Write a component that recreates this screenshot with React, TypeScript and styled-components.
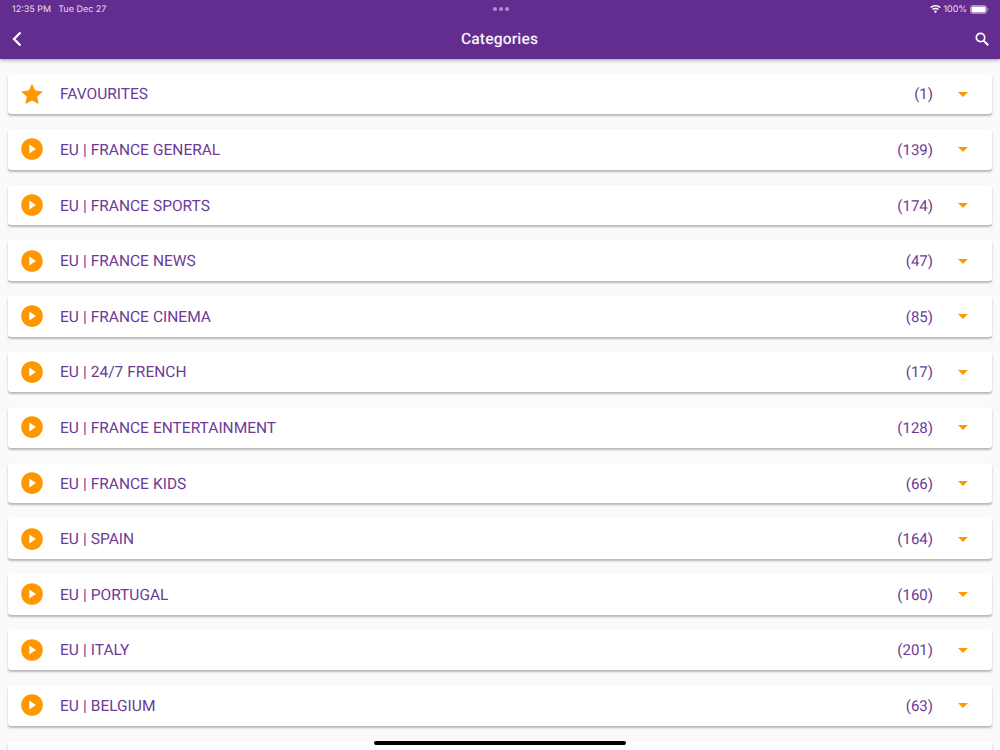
import React from "react";
import styled, { createGlobalStyle } from "styled-components";

const Global = createGlobalStyle`
  html, body { margin: 0; padding: 0; background: #fafafa; }
  body { font-family: Roboto, "Liberation Sans", sans-serif; text-rendering: geometricPrecision; }
`;

const Page = styled.div`
  position: relative;
  width: 1000px;
  height: 750px;
  overflow: hidden;
  background: #fafafa;
  display: flex;
  flex-direction: column;
`;

const Header = styled.header`
  flex: none;
  height: 59px;
  background: #632c8f;
  color: #fff;
  display: flex;
  flex-direction: column;
  box-shadow: 0 1px 4px rgba(0, 0, 0, 0.4);
  z-index: 2;
`;

const StatusBar = styled.div`
  height: 18px;
  display: grid;
  grid-template-columns: 1fr auto 1fr;
  align-items: center;
  padding: 0 11px 0 12px;
  font-family: Inter, Roboto, sans-serif;
  font-size: 9px;
  color: #eadff1;
`;

const StatusLeft = styled.div`
  display: flex;
  gap: 7px;
`;

const Dots = styled.div`
  display: flex;
  gap: 2px;
`;

const Dot = styled.span`
  width: 4px;
  height: 4px;
  border-radius: 50%;
  background: #b88ad8;
`;

const StatusRight = styled.div`
  display: flex;
  justify-content: flex-end;
  align-items: center;
  gap: 3px;
  letter-spacing: -0.1px;
`;

const NavBar = styled.div`
  flex: 1;
  display: flex;
  align-items: center;
  justify-content: space-between;
  padding: 0 11px 0 10px;
`;

const Title = styled.h1`
  margin: 0;
  font-size: 15.6px;
  font-weight: 500;
  letter-spacing: 0.15px;
  color: #f6f1fa;
`;

const IconSlot = styled.div`
  display: flex;
`;

const List = styled.main`
  flex: 1;
  display: flex;
  flex-direction: column;
  gap: 15px;
  padding: 14.6px 8px 0;
`;

const Card = styled.div`
  flex: none;
  height: 40.6px;
  display: flex;
  align-items: center;
  background: #fff;
  border-radius: 3px;
  box-shadow: 0 2px 2px rgba(0, 0, 0, 0.26), 0 0 1px rgba(0, 0, 0, 0.1);
  padding: 0 24.5px 0 13px;
`;

const Label = styled.span`
  flex: 1;
  margin-left: 17px;
  color: #6d3a97;
  font-size: 15.5px;
  word-spacing: 0.2px;
  padding-top: 1px;
`;

const Count = styled.span`
  color: #6d3a97;
  font-size: 15px;
  margin-right: 24.5px;
  padding-top: 1px;
`;

const Caret = styled.span`
  width: 0;
  height: 0;
  margin-top: 1px;
  border-left: 5px solid transparent;
  border-right: 5px solid transparent;
  border-top: 5px solid #ff9800;
`;

const HomeBar = styled.div`
  position: absolute;
  left: 374px;
  bottom: 5px;
  width: 252px;
  height: 4px;
  border-radius: 2px;
  background: #000;
  z-index: 3;
`;

const Star = () => (
  <svg width="22" height="22" viewBox="0 0 24 24" fill="#ff9800" style={{ flex: "none" }}>
    <path d="M12 .8l3.500 7.500 8.200 1-6 5.600 1.600 8.100L12 19l-7.300 4 1.600-8.100-6-5.600 8.200-1z" />
  </svg>
);

const Play = () => (
  <svg width="22" height="22" viewBox="0 0 22 22" style={{ flex: "none" }}>
    <circle cx="11" cy="11" r="10.8" fill="#ff9800" />
    <path d="M8.300 6.600v8.800l6.600-4.400z" fill="#fff" />
  </svg>
);

const Back = () => (
  <svg width="14" height="18" viewBox="0 0 14 18" fill="none" stroke="#fff" strokeWidth="2.3">
    <path d="M10.500 2.500L4 9l6.500 6.500" />
  </svg>
);

const Search = () => (
  <svg width="14" height="14" viewBox="0 0 14 14" fill="none" stroke="#fff">
    <circle cx="5.500" cy="5.500" r="4.200" strokeWidth="1.700" />
    <path d="M8.600 8.600l4.600 4.600" strokeWidth="2" />
  </svg>
);

const Wifi = () => (
  <svg width="11" height="9" viewBox="0 0 11 9" fill="#fff">
    <path d="M5.500 0C3.400 0 1.600.8.200 2.100l1 1C2.300 2 3.800 1.400 5.500 1.400s3.200.6 4.300 1.700l1-1C9.400.8 7.600 0 5.500 0zM5.500 2.800c-1.300 0-2.500.5-3.400 1.300l1 1c.6-.6 1.500-.9 2.400-.9s1.800.3 2.400.9l1-1C8 3.300 6.800 2.800 5.500 2.800zM5.500 5.600c-.6 0-1.200.2-1.500.6l1.500 2 1.500-2c-.3-.4-.9-.6-1.500-.6z" />
  </svg>
);

const Battery = () => (
  <svg width="19" height="9" viewBox="0 0 19.500 9">
    <rect x="0.500" y="0.500" width="16.500" height="8" rx="2" fill="none" stroke="#b99ccf" />
    <rect x="1.500" y="1.500" width="14.500" height="6" rx="1" fill="#fff" />
    <path d="M18 3v3c.6-.2 1-.8 1-1.500S18.600 3.200 18 3z" fill="#b99ccf" />
  </svg>
);

const rows: Array<[string, number, boolean?]> = [
  ["FAVOURITES", 1, true],
  ["EU | FRANCE GENERAL", 139],
  ["EU | FRANCE SPORTS", 174],
  ["EU | FRANCE NEWS", 47],
  ["EU | FRANCE CINEMA", 85],
  ["EU | 24/7 FRENCH", 17],
  ["EU | FRANCE ENTERTAINMENT", 128],
  ["EU | FRANCE KIDS", 66],
  ["EU | SPAIN", 164],
  ["EU | PORTUGAL", 160],
  ["EU | ITALY", 201],
  ["EU | BELGIUM", 63],
];

export default function App() {
  return (
    <Page>
      <Global />
      <Header>
        <StatusBar>
          <StatusLeft>
            <span>12:35 PM</span>
            <span>Tue Dec 27</span>
          </StatusLeft>
          <Dots>
            <Dot />
            <Dot />
            <Dot />
          </Dots>
          <StatusRight>
            <Wifi />
            <span>100%</span>
            <Battery />
          </StatusRight>
        </StatusBar>
        <NavBar>
          <IconSlot>
            <Back />
          </IconSlot>
          <Title>Categories</Title>
          <IconSlot>
            <Search />
          </IconSlot>
        </NavBar>
      </Header>
      <List>
        {rows.map(([name, count, fav]) => (
          <Card key={name}>
            {fav ? <Star /> : <Play />}
            <Label>{name}</Label>
            <Count>({count})</Count>
            <Caret />
          </Card>
        ))}
        <Card />
      </List>
      <HomeBar />
    </Page>
  );
}
